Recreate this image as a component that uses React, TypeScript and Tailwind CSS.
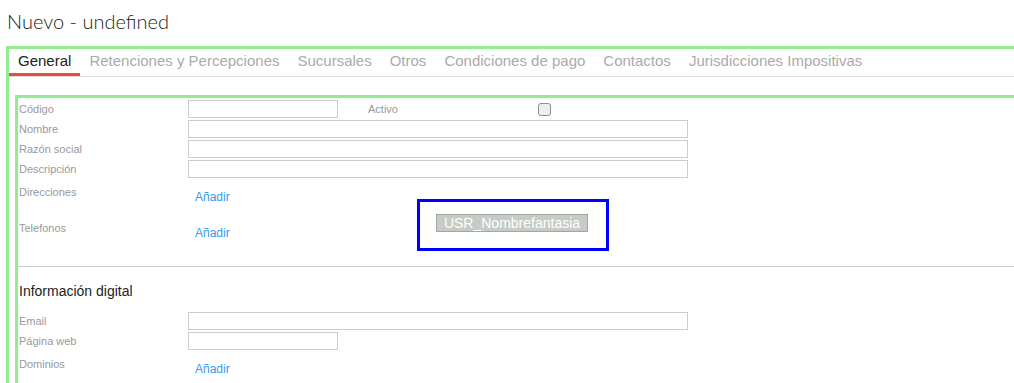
import React from "react"

const tabs = [
  "General",
  "Retenciones y Percepciones",
  "Sucursales",
  "Otros",
  "Condiciones de pago",
  "Contactos",
  "Jurisdicciones Impositivas",
]

function Field({ label, wide = true }: { label: string; wide?: boolean }) {
  return (
    <div className="flex h-[18px] items-center">
      <label className="w-[170px] pl-px text-[11px] leading-[15px] text-[#999]">{label}</label>
      <input
        type="text"
        className={`h-[18px] border border-[#ccc] bg-white outline-none ${wide ? "w-[500px]" : "w-[150px]"}`}
      />
    </div>
  )
}

function ListRow({ label, top = 5, linkTop = 9 }: { label: string; top?: number; linkTop?: number }) {
  return (
    <div className="flex h-[36px] items-start">
      <div
        className="w-[170px] pl-px text-[11px] leading-[15px] text-[#999]"
        style={{ paddingTop: top }}
      >
        {label}
      </div>
      <a
        href="#"
        className="ml-[7px] text-[12px] leading-[16px] text-[#3399f0]"
        style={{ paddingTop: linkTop }}
      >
        Añadir
      </a>
    </div>
  )
}

export default function App() {
  return (
    <div className="h-[383px] w-[1014px] overflow-hidden bg-white font-['Liberation_Sans',Arial,sans-serif]">
      <h1 className="pl-[7px] pt-[8px] font-['Lato',sans-serif] text-[20px] font-light leading-[27px] text-[#222]">
        Nuevo - undefined
      </h1>

      <div className="ml-[6px] mt-[11px] w-[1100px] border-[3px] border-r-0 border-b-0 border-[#90ee90] pb-10">
        <div className="flex border-b border-[#ddd]">
          {tabs.map((t, i) => (
            <div
              key={t}
              className={
                i === 0
                  ? "border-b-[3px] border-[#e74c3c] px-[9px] text-[15px] leading-[24px] text-[#222]"
                  : "border-b-[3px] border-transparent px-[9px] text-[15px] leading-[24px] text-[#aaa]"
              }
            >
              {t}
            </div>
          ))}
        </div>

        <div className="relative ml-[6px] mt-[18px] border-[3px] border-r-0 border-b-0 border-[#90ee90] pb-10">
          <div className="flex flex-col gap-[2px] pt-[2px]">
            <div className="flex h-[18px] items-center">
              <label className="w-[170px] pl-px text-[11px] leading-[15px] text-[#999]">Código</label>
              <input type="text" className="h-[18px] w-[150px] border border-[#ccc] outline-none" />
              <label className="ml-[30px] w-[170px] text-[11px] leading-[15px] text-[#999]">Activo</label>
              <span className="h-[13px] w-[13px] rounded-[3px] border border-[#8f8f8f] bg-[#eee]" />
            </div>
            <Field label="Nombre" />
            <Field label="Razón social" />
            <Field label="Descripción" />
          </div>

          <div className="pt-[2px]">
            <ListRow label="Direcciones" />
            <ListRow label="Telefonos" />
          </div>

          <div className="absolute left-[399px] top-[101px] h-[52px] w-[192px] border-[3px] border-[#0000ff] pl-[16px] pt-[12px]">
            <div className="flex h-[18px] w-[152px] items-center justify-center border border-[#9faa9f] bg-[#c6cbc6] text-[14px] leading-[16px] text-white">
              USR_Nombrefantasia
            </div>
          </div>

          <hr className="mt-[14px] border-t border-[#ccc]" />

          <h2 className="mt-[14px] pl-px text-[14px] leading-[20px] text-[#222]">Información digital</h2>

          <div className="mt-[11px] flex flex-col gap-[2px]">
            <Field label="Email" />
            <Field label="Página web" wide={false} />
          </div>
          <div className="pt-[2px]">
            <ListRow label="Dominios" top={5} linkTop={9} />
          </div>
        </div>
      </div>
    </div>
  )
}
